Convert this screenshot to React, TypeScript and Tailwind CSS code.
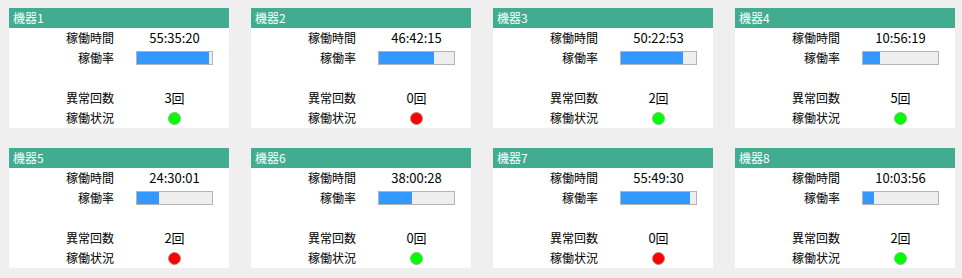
import React from "react";

type Machine = {
  name: string;
  time: string;
  rate: number;
  errors: number;
  ok: boolean;
};

const machines: Machine[] = [
  { name: "機器1", time: "55:35:20", rate: 96, errors: 3, ok: true },
  { name: "機器2", time: "46:42:15", rate: 73, errors: 0, ok: false },
  { name: "機器3", time: "50:22:53", rate: 83, errors: 2, ok: true },
  { name: "機器4", time: "10:56:19", rate: 23, errors: 5, ok: true },
  { name: "機器5", time: "24:30:01", rate: 29, errors: 2, ok: false },
  { name: "機器6", time: "38:00:28", rate: 44, errors: 0, ok: true },
  { name: "機器7", time: "55:49:30", rate: 92, errors: 0, ok: false },
  { name: "機器8", time: "10:03:56", rate: 15, errors: 2, ok: true },
];

function MachineCard({ m }: { m: Machine }) {
  return (
    <div className="w-[220px] bg-white">
      <div className="h-5 bg-[#41ac8f] pl-1 flex items-center text-white text-[12px] leading-none">
        {m.name}
      </div>
      <div className="grid grid-cols-[105px_77px] gap-x-[22px] auto-rows-[20px] text-[12px] text-black">
        <div className="flex items-center justify-end">稼働時間</div>
        <div className="flex items-center justify-center text-[13px]">{m.time}</div>

        <div className="flex items-center justify-end">稼働率</div>
        <div className="flex items-center">
          <div className="w-[77px] h-[14px] border border-[#b4b4b4] bg-[#eeeeee]">
            <div className="h-full bg-[#3399ff]" style={{ width: `${m.rate}%` }} />
          </div>
        </div>

        <div />
        <div />

        <div className="flex items-center justify-end">異常回数</div>
        <div className="flex items-center justify-center text-[13px]">{m.errors}回</div>

        <div className="flex items-center justify-end">稼働状況</div>
        <div className="flex items-center justify-center">
          <div
            className={
              m.ok
                ? "w-[13px] h-[13px] rounded-full bg-[#00ff00] border border-[#7fbf7f]"
                : "w-[13px] h-[13px] rounded-full bg-[#ff0000] border border-[#bf7f7f]"
            }
          />
        </div>
      </div>
    </div>
  );
}

export default function App() {
  return (
    <div
      className="min-h-screen bg-[#efefef] pl-[9px] pt-2"
      style={{ fontFamily: '"Noto Sans CJK JP", "Noto Sans", sans-serif' }}
    >
      <div className="grid grid-cols-[repeat(4,220px)] gap-x-[22px] gap-y-5">
        {machines.map((m) => (
          <MachineCard key={m.name} m={m} />
        ))}
      </div>
    </div>
  );
}
